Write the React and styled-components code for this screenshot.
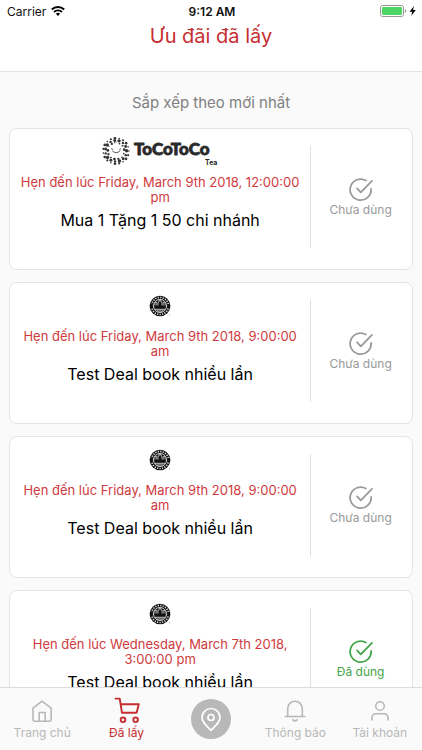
import React from "react";
import styled, { createGlobalStyle } from "styled-components";

const GlobalStyle = createGlobalStyle`
  * {
    box-sizing: border-box;
  }
  body {
    margin: 0;
    background-color: #fafafa;
    font-family: Inter, Roboto, "Liberation Sans", sans-serif;
  }
`;
const Screen = styled.div`
  height: 100vh;
  display: flex;
  flex-direction: column;
  background-color: #fafafa;
`;
const Header = styled.header`
  height: 72px;
  flex-shrink: 0;
  background-color: #fff;
  border-bottom: 1px solid #e2e2e2;
`;
const StatusBar = styled.div`
  display: grid;
  grid-template-columns: 1fr auto 1fr;
  align-items: center;
  height: 22px;
  padding: 0 5px 0 7px;
  font-size: 12px;
  color: #111;
`;
const Carrier = styled.div`
  display: flex;
  align-items: center;
  gap: 5px;
`;
const Clock = styled.div`
  font-weight: 600;
`;
const Battery = styled.div`
  display: flex;
  justify-content: flex-end;
`;
const Title = styled.h1`
  margin: 0;
  text-align: center;
  font-size: 20px;
  line-height: 28px;
  font-weight: 400;
  color: #c62f32;
`;
const Content = styled.main`
  flex: 1;
  min-height: 0;
  overflow-y: auto;
  scrollbar-width: none;
  padding: 0 9px;
`;
const SortButton = styled.button`
  display: block;
  width: 100%;
  height: 56px;
  padding: 4px 0 0;
  border: none;
  background: none;
  font-family: inherit;
  font-size: 15px;
  color: #808080;
  cursor: pointer;
`;
const DealList = styled.ul`
  display: flex;
  flex-direction: column;
  gap: 12px;
  margin: 0;
  padding: 0 0 12px;
  list-style: none;
`;
const Card = styled.li`
  display: grid;
  grid-template-columns: 2.95fr 1fr;
  height: 142px;
  background-color: #fff;
  border: 1px solid #e4e4e4;
  border-radius: 8px;
`;
const Info = styled.div`
  display: flex;
  flex-direction: column;
  align-items: center;
  padding: 8px 10px 0;
  text-align: center;
`;
const Logo = styled.div`
  height: 30px;
  display: flex;
  align-items: center;
`;
const Expiry = styled.p`
  margin: 8px 0 0;
  font-size: 13px;
  line-height: 15px;
  color: #d03a3d;
`;
const DealName = styled.h2`
  margin: 4px 0 0;
  font-size: 16px;
  line-height: 22px;
  font-weight: 400;
  color: #000;
`;
const Status = styled.div`
  height: 102px;
  margin-top: 17px;
  padding-right: 2px;
  display: flex;
  flex-direction: column;
  align-items: center;
  justify-content: center;
  border-left: 1px solid #e0e0e0;
  font-size: 12px;
  line-height: 16px;
  color: ${(props) => (props.$used ? "#43a548" : "#999")};
`;
const TabBar = styled.nav`
  flex-shrink: 0;
  height: 63px;
  display: grid;
  grid-template-columns: repeat(5, 1fr);
  background-color: #fafafa;
  border-top: 1px solid #dcdcdc;
`;
const Tab = styled.a`
  display: flex;
  flex-direction: column;
  align-items: center;
  justify-content: center;
  font-size: 12px;
  line-height: 16px;
  text-decoration: none;
  color: ${(props) => (props.$active ? "#c62f32" : "#b8b8b8")};
`;
const PinCircle = styled.span`
  display: flex;
  align-items: center;
  justify-content: center;
  width: 40px;
  height: 40px;
  border-radius: 50%;
  background-color: #b8b8b8;
  color: #fff;
`;

const Icon = ({ children, size = 28, stroke = 1.6 }) => (
  <svg
    width={size}
    height={size}
    viewBox="0 0 28 28"
    fill="none"
    stroke="currentColor"
    strokeWidth={stroke}
    strokeLinecap="round"
    strokeLinejoin="round"
    aria-hidden="true"
  >
    {children}
  </svg>
);

const HomeIcon = () => (
  <Icon>
    <path d="M5 11.2 14 4.2l9.2 7v11.4a1.6 1.6 0 0 1-1.6 1.6h-15A1.6 1.6 0 0 1 5 22.6Z" />
    <path d="M11.200 24v-8.500h6V24" />
  </Icon>
);
const CartIcon = () => (
  <Icon stroke={1.9}>
    <path d="M2.500 1.600h4.200l2.300 14.200h14.600L25.800 7.200H7.800" />
    <circle cx="10" cy="22.800" r="2.300" />
    <circle cx="22.600" cy="22.800" r="2.300" />
  </Icon>
);
const BellIcon = () => (
  <Icon>
    <path d="M4.200 19.500h19.600M6.700 19.500v-8a7.300 7.300 0 0 1 14.600 0v8" />
    <path d="M11.800 22.800q2.200 2 4.400 0" />
  </Icon>
);
const UserIcon = () => (
  <Icon>
    <circle cx="14" cy="9" r="4.300" />
    <path d="M6 23v-2.500a3.800 3.800 0 0 1 3.800-3.800h8.400a3.800 3.800 0 0 1 3.800 3.800V23" />
  </Icon>
);
const PinIcon = () => (
  <Icon stroke={1.7}>
    <path d="M14 25.300C9 20.300 5 17 5 12.500a9 9 0 0 1 18 0c0 4.500-4 7.800-9 12.800Z" />
    <circle cx="14" cy="12.500" r="3" />
  </Icon>
);
const CheckIcon = () => (
  <Icon size={26} stroke={1.9}>
    <path d="M19.300 4.900A11.300 11.300 0 1 0 24.900 14" />
    <path d="m9.800 13.300 4 4.300L25.800 5.300" />
  </Icon>
);

const WifiIcon = () => (
  <svg width="14" height="10" viewBox="0 0 14 10" fill="none" aria-hidden="true">
    <path d="M.8 3.500a9 9 0 0 1 12.400 0" stroke="#000" strokeWidth="2" />
    <path d="M3 6a5.800 5.800 0 0 1 8 0" stroke="#000" strokeWidth="1.800" />
    <path d="M7 10 4.900 7.800a3 3 0 0 1 4.200 0Z" fill="#000" />
  </svg>
);
const BatteryIcon = () => (
  <svg width="37" height="12" viewBox="0 0 37 12" aria-hidden="true">
    <rect x=".5" y=".5" width="23" height="11" rx="2" fill="#fff" stroke="#999" />
    <rect x="2" y="2" width="20" height="8" rx="1" fill="#4cd663" />
    <path d="M24.800 4v4q1.400-.5 1.400-2t-1.400-2Z" fill="#999" />
    <path d="M34 1 29.500 6.700h2.800L31.200 11l4.600-6H33Z" fill="#000" />
  </svg>
);

// rings of small dots around the smiling star
const dots = [];
[
  { r: 12.8, count: 19, size: 0.8 },
  { r: 10.6, count: 15, size: 1.2 },
  { r: 8.2, count: 13, size: 0.9 },
].forEach((ring, level) => {
  for (let i = 0; i < ring.count; i++) {
    const angle = (i / ring.count) * Math.PI * 2 + level * 0.4;
    dots.push({
      x: 14 + ring.r * Math.cos(angle),
      y: 14 + ring.r * Math.sin(angle),
      size: ring.size + (i % 3) * 0.25,
    });
  }
});

const TocotocoLogo = () => (
  <svg width="116" height="30" viewBox="0 0 116 30" role="img" aria-label="TocoToco Tea">
    {dots.map((dot, i) => (
      <circle key={i} cx={dot.x} cy={dot.y} r={dot.size} fill="#333" />
    ))}
    <path
      d="M14 4.500 17 9l5.500.8-3.500 4.400 1.200 5.800-6.200-2-6 2 1-5.800-3.500-4.400L11 9Z"
      fill="#fff"
    />
    <path
      d="M10.500 14q3.500 3.600 7.500 0M9.500 11.800l1.200.5M18.800 11.800l-1.200.5"
      fill="none"
      stroke="#444"
      strokeWidth=".9"
      strokeLinecap="round"
    />
    <text
      x="32"
      y="18"
      fontFamily="Lato, sans-serif"
      fontWeight="900"
      fontSize="17"
      fill="#2a2a2a"
      stroke="#2a2a2a"
      strokeWidth=".8"
      strokeLinejoin="round"
    >
      ToCoToCo
    </text>
    <text x="103" y="28" fontFamily="Inter, sans-serif" fontWeight="700" fontSize="7" fill="#2a2a2a">
      Tea
    </text>
  </svg>
);

const SealLogo = () => (
  <svg width="22" height="22" viewBox="0 0 22 22" role="img" aria-label="Coffee house">
    <circle cx="11" cy="11" r="10.3" fill="#111" />
    <circle
      cx="11"
      cy="11"
      r="8.500"
      fill="none"
      stroke="#e4e4e4"
      strokeWidth="1.600"
      strokeDasharray="1.200 1.300"
    />
    <path d="M2.300 9v4M19.700 9v4" stroke="#111" strokeWidth="2.800" />
    <circle cx="11" cy="11" r="6.500" fill="#111" stroke="#eee" strokeWidth=".9" />
    <path
      d="M6 10.500V8.200l1-1.200.8 1v2.500M9 10.500V7h1V5.500h2V7h1v3.500M14.200 10.500V8l.8-1 1 1.200v2.300"
      fill="none"
      stroke="#ccc"
      strokeWidth=".8"
    />
    <path d="M6 14.300h10M7.500 16h7" stroke="#ddd" strokeWidth=".9" />
    <circle cx="20.700" cy="19.800" r=".5" fill="#777" />
  </svg>
);

const deals = [
  {
    id: 1,
    brand: "tocotoco",
    expiry: "Friday, March 9th 2018, 12:00:00 pm",
    name: "Mua 1 Tặng 1 50 chi nhánh",
    used: false,
  },
  {
    id: 2,
    brand: "seal",
    expiry: "Friday, March 9th 2018, 9:00:00 am",
    name: "Test Deal book nhiều lần",
    used: false,
  },
  {
    id: 3,
    brand: "seal",
    expiry: "Friday, March 9th 2018, 9:00:00 am",
    name: "Test Deal book nhiều lần",
    used: false,
  },
  {
    id: 4,
    brand: "seal",
    expiry: "Wednesday, March 7th 2018, 3:00:00 pm",
    name: "Test Deal book nhiều lần",
    used: true,
  },
];

const DealCard = ({ deal }) => (
  <Card>
    <Info>
      <Logo>{deal.brand === "tocotoco" ? <TocotocoLogo /> : <SealLogo />}</Logo>
      <Expiry>Hẹn đến lúc {deal.expiry}</Expiry>
      <DealName>{deal.name}</DealName>
    </Info>
    <Status $used={deal.used}>
      <CheckIcon />
      {deal.used ? "Đã dùng" : "Chưa dùng"}
    </Status>
  </Card>
);

const App = () => {
  return (
    <Screen>
      <GlobalStyle />
      <Header>
        <StatusBar>
          <Carrier>
            Carrier
            <WifiIcon />
          </Carrier>
          <Clock>9:12 AM</Clock>
          <Battery>
            <BatteryIcon />
          </Battery>
        </StatusBar>
        <Title>Ưu đãi đã lấy</Title>
      </Header>
      <Content>
        <SortButton>Sắp xếp theo mới nhất</SortButton>
        <DealList>
          {deals.map((deal) => (
            <DealCard key={deal.id} deal={deal} />
          ))}
        </DealList>
      </Content>
      <TabBar>
        <Tab href="#home">
          <HomeIcon />
          Trang chủ
        </Tab>
        <Tab href="#taken" $active aria-current="page">
          <CartIcon />
          Đã lấy
        </Tab>
        <Tab href="#nearby" aria-label="Gần đây">
          <PinCircle>
            <PinIcon />
          </PinCircle>
        </Tab>
        <Tab href="#notifications">
          <BellIcon />
          Thông báo
        </Tab>
        <Tab href="#account">
          <UserIcon />
          Tài khoản
        </Tab>
      </TabBar>
    </Screen>
  );
};

export default App;
